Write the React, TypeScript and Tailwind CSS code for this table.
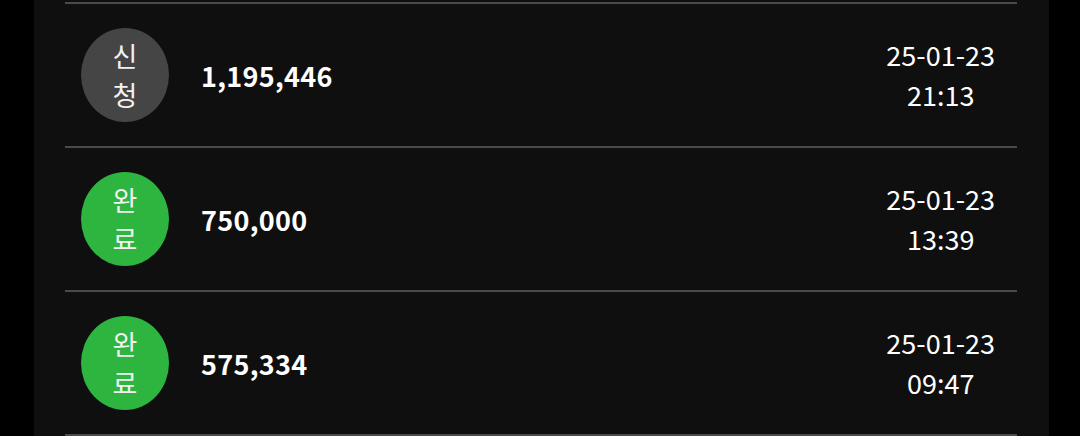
import React from "react";

type Row = { status: "신청" | "완료"; amount: string; date: string; time: string };

const rows: Row[] = [
  { status: "신청", amount: "1,195,446", date: "25-01-23", time: "21:13" },
  { status: "완료", amount: "750,000", date: "25-01-23", time: "13:39" },
  { status: "완료", amount: "575,334", date: "25-01-23", time: "09:47" },
];

export default function App() {
  return (
    <div
      className="w-[1080px] h-[436px] bg-black overflow-hidden"
      style={{ fontFamily: '"Noto Sans CJK KR", "Noto Sans", sans-serif' }}
    >
      <div className="ml-[34px] w-[1015px] h-full bg-[#0f0f0f] pl-[31px] pr-[32px] pt-[2px]">
        <div className="border-t-2 border-[#4a4a4a]">
          {rows.map((r, i) => (
            <div
              key={i}
              className="h-[142px] border-b-2 border-[#4a4a4a] flex items-center pl-[16px] pr-[22px] box-content"
            >
              <div
                className={`w-[88px] h-[94px] rounded-[50%] flex flex-col items-center justify-center text-[#f2f2f2] text-[27px] leading-[39px] ${
                  r.status === "신청" ? "bg-[#454545]" : "bg-[#2db53f]"
                }`}
              >
                <span>{r.status[0]}</span>
                <span>{r.status[1]}</span>
              </div>
              <div className="ml-[32px] text-white font-bold text-[27px] leading-none tracking-[0.3px]">
                {r.amount}
              </div>
              <div className="ml-auto flex flex-col items-center text-white text-[27px] leading-[40px]">
                <span>{r.date}</span>
                <span>{r.time}</span>
              </div>
            </div>
          ))}
        </div>
      </div>
    </div>
  );
}
